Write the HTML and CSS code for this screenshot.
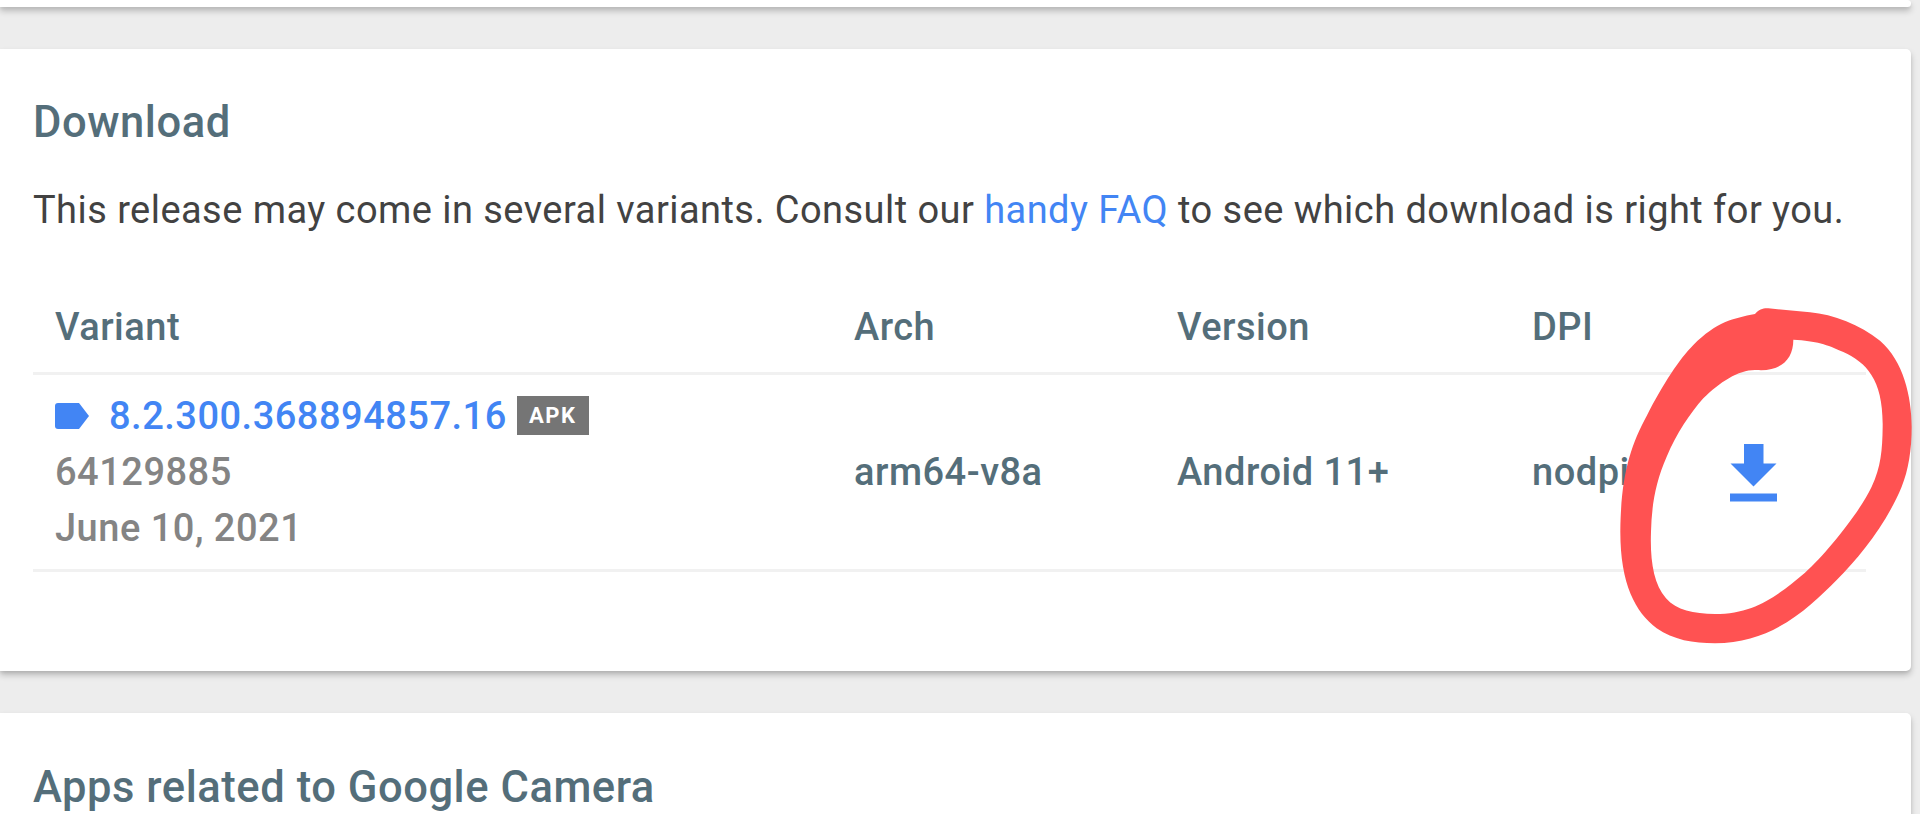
FILE: index.html
```html
<!DOCTYPE html>
<html lang="en">
<head>
    <meta charset="UTF-8">
    <meta name="viewport" content="width=device-width, initial-scale=1.0">
    <title>Google Camera - Download</title>
    <link rel="stylesheet" href="styles.css">
</head>
<body>
    <div class="card card-top"></div>

    <div class="card card-download">
        <h2 class="title">Download</h2>
        <p class="intro">This release may come in several variants. Consult our <a class="link" href="#">handy FAQ</a> to see which download is right for you.</p>

        <div class="table">
            <div class="row row-head">
                <div>Variant</div>
                <div>Arch</div>
                <div>Version</div>
                <div>DPI</div>
                <div></div>
            </div>
            <div class="row row-body">
                <div class="variant">
                    <div class="variant-name">
                        <svg class="tag" viewBox="0 0 34 26"><path d="M3 0H24L34 13L24 26H3Q0 26 0 23V3Q0 0 3 0Z"/></svg>
                        <a class="link version" href="#">8.2.300.368894857.16</a>
                        <span class="badge">APK</span>
                    </div>
                    <div class="muted">64129885</div>
                    <div class="muted">June 10, 2021</div>
                </div>
                <div>arm64-v8a</div>
                <div>Android 11+</div>
                <div>nodpi</div>
                <div class="download">
                    <svg class="download-icon" viewBox="0 0 47 58"><path d="M14 0H33.500V19.500H46.500L23.500 42.500L0.500 19.500H14ZM0 49.500H47V57.500H0Z"/></svg>
                    <!-- hand-drawn marker round the download button -->
                    <svg class="marker" viewBox="0 0 1080 1110"><path fill-rule="evenodd" d="M585 72C597 58 610 54 625 55L750 67C820 73 900 105 960 152C1030 212 1055 320 1055 410C1055 480 1045 540 1025 590C980 700 900 800 830 870C750 950 640 1060 465 1060C400 1060 340 1050 290 1015C225 965 180 880 181 720C183 560 210 470 260 378C310 280 360 205 400 165C470 95 520 85 585 72ZM700 149C770 153 800 163 850 186C920 218 970 270 968 410C967 480 963 530 935 590C900 665 800 790 735 848C660 910 590 972 465 972C400 971 350 962 318 925C280 880 270 810 273 725C275 650 285 580 320 500C350 430 390 370 430 325C480 275 540 237 590 240C660 245 700 210 700 149Z"/></svg>
                </div>
            </div>
        </div>
    </div>

    <div class="card card-related">
        <h2 class="title">Apps related to Google Camera</h2>
    </div>
</body>
</html>
```

FILE: styles.css
```css
* {
    box-sizing: border-box;
}
body {
    display: flex;
    flex-direction: column;
    gap: 42px;
    height: 814px;
    margin: 0;
    overflow: hidden;
    background: #ededed;
    font-family: Roboto, sans-serif;
    font-size: 38px;
    line-height: 56px;
    color: #424242;
}
.card {
    flex-shrink: 0;
    width: 1911px;
    padding: 0 45px 0 33px;
    background: #fff;
    border-radius: 0 5px 5px 0;
    box-shadow: 0 4px 6px rgba(0, 0, 0, 0.22), 0 2px 3px rgba(0, 0, 0, 0.06);
}
.card-top {
    height: 7px;
}
.card-download {
    height: 622px;
    padding-top: 46px;
}
.card-related {
    height: 130px;
    padding-top: 47px;
}
.title {
    margin: 0;
    font-size: 43.500px;
    font-weight: 500;
    line-height: 56px;
    letter-spacing: 0.550px;
    color: #546e7a;
}
.intro {
    margin: 31px 0 0;
    letter-spacing: 0.45px;
    white-space: nowrap;
}
.link {
    color: #4285f4;
    text-decoration: none;
}
.table {
    margin-top: 61px;
    font-weight: 500;
    letter-spacing: 0.5px;
    color: #546e7a;
}
.row {
    display: grid;
    grid-template-columns: 799px 323px 355px 164px 1fr;
    align-items: center;
    padding-left: 22px;
    border-bottom: 3px solid #f1f1f1;
}
.row-head {
    height: 76px;
    padding-bottom: 18px;
}
.row-body {
    height: 197px;
}
.variant-name {
    display: flex;
    align-items: center;
    height: 56px;
}
.tag {
    width: 34px;
    height: 26px;
    margin-bottom: 1px;
    fill: #4285f4;
}
.version {
    margin-left: 20px;
}
.badge {
    width: 72px;
    height: 39px;
    margin: 0 0 2px 10px;
    background: #757575;
    color: #fff;
    font-size: 22px;
    font-weight: 700;
    line-height: 40px;
    letter-spacing: 1.5px;
    text-align: center;
}
.muted {
    color: #848484;
}
.download {
    position: relative;
    display: flex;
    padding: 2px 0 0 34px;
}
.download-icon {
    width: 47px;
    height: 58px;
    fill: #4285f4;
}
.marker {
    position: absolute;
    left: -136px;
    top: -152px;
    width: 360px;
    height: 370px;
    fill: #ff5252;
}
```
